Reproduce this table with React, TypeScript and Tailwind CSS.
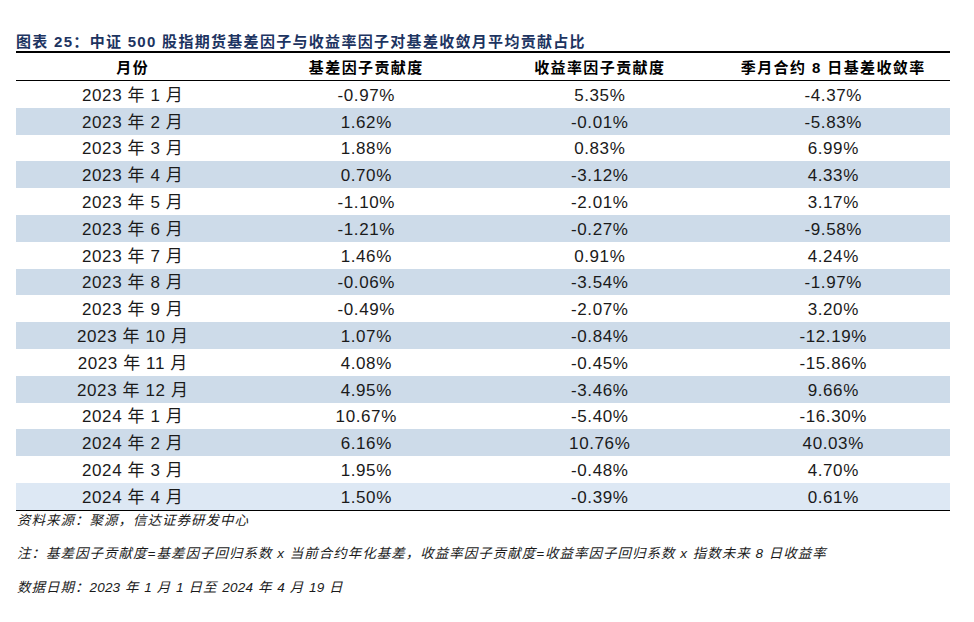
const rows = [
  ["2023 年 1 月", "-0.97%", "5.35%", "-4.37%"],
  ["2023 年 2 月", "1.62%", "-0.01%", "-5.83%"],
  ["2023 年 3 月", "1.88%", "0.83%", "6.99%"],
  ["2023 年 4 月", "0.70%", "-3.12%", "4.33%"],
  ["2023 年 5 月", "-1.10%", "-2.01%", "3.17%"],
  ["2023 年 6 月", "-1.21%", "-0.27%", "-9.58%"],
  ["2023 年 7 月", "1.46%", "0.91%", "4.24%"],
  ["2023 年 8 月", "-0.06%", "-3.54%", "-1.97%"],
  ["2023 年 9 月", "-0.49%", "-2.07%", "3.20%"],
  ["2023 年 10 月", "1.07%", "-0.84%", "-12.19%"],
  ["2023 年 11 月", "4.08%", "-0.45%", "-15.86%"],
  ["2023 年 12 月", "4.95%", "-3.46%", "9.66%"],
  ["2024 年 1 月", "10.67%", "-5.40%", "-16.30%"],
  ["2024 年 2 月", "6.16%", "10.76%", "40.03%"],
  ["2024 年 3 月", "1.95%", "-0.48%", "4.70%"],
  ["2024 年 4 月", "1.50%", "-0.39%", "0.61%"],
];

const headers = ["月份", "基差因子贡献度", "收益率因子贡献度", "季月合约 8 日基差收敛率"];

function Num({ children }: { children: React.ReactNode }) {
  return <span className="tracking-[0.2px]">{children}</span>;
}

export default function App() {
  return (
    <div className="h-[622px] w-[974px] bg-white pl-4 pt-[32px] font-['Liberation_Sans','Noto_Sans_CJK_SC',sans-serif]">
      <div className="w-[934px]">
        {/* title */}
        <div className="h-[21px] border-b-2 border-black text-[15px] font-bold leading-[19px] tracking-[1.3px] text-[#1d3461]">
          图表 25：中证 500 股指期货基差因子与收益率因子对基差收敛月平均贡献占比
        </div>

        {/* header */}
        <div className="grid h-[28px] grid-cols-4 items-center border-b border-black pt-[3px] text-[15px] font-bold tracking-[1.4px] text-black">
          {headers.map((h) => (
            <div key={h} className="text-center">
              {h}
            </div>
          ))}
        </div>

        {/* body */}
        <div className="border-b-[1.5px] border-black">
          {rows.map((r, i) => (
            <div
              key={r[0]}
              className={
                "grid h-[26.8px] grid-cols-4 items-center text-[17px] leading-none text-[#1a1a1a] " +
                (i === 15 ? "bg-[#dde8f4]" : i % 2 === 1 ? "bg-[#cddbe9]" : "bg-white")
              }
            >
              {r.map((c, j) => (
                <div key={j} className="pt-[2px] text-center tracking-[0.6px]">
                  {c}
                </div>
              ))}
            </div>
          ))}
        </div>

        {/* notes */}
        <div className="pl-[1px] text-[13.5px] italic leading-[18px] tracking-[1px] text-[#1a1a1a]">
          <p className="mt-[1px]">资料来源：聚源，信达证券研发中心</p>
          <p className="mt-[15px]">
            注：基差因子贡献度=基差因子回归系数 x 当前合约年化基差，收益率因子贡献度=收益率因子回归系数 x 指数未来 8 日收益率
          </p>
          <p className="mt-[16px]">
            数据日期：<Num>2023</Num> 年 <Num>1</Num> 月 <Num>1</Num> 日至 <Num>2024</Num> 年{" "}
            <Num>4</Num> 月 <Num>19</Num> 日
          </p>
        </div>
      </div>
    </div>
  );
}
